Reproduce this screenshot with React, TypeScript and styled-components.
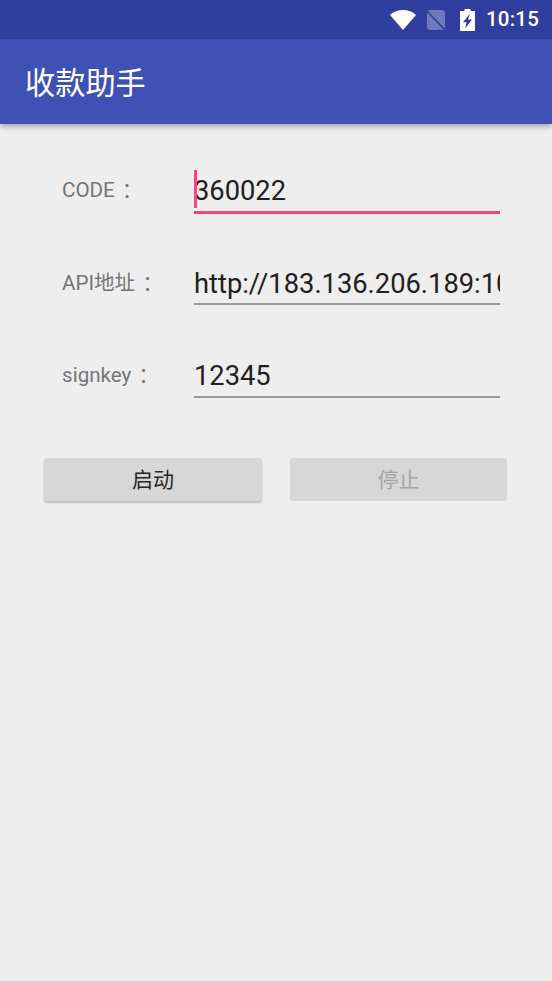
import React from 'react';
import styled, { createGlobalStyle } from 'styled-components';

const GlobalStyle = createGlobalStyle`
  html, body {
    margin: 0;
    padding: 0;
    background: #eeeeee;
  }
  body {
    font-family: Roboto, "Noto Sans CJK SC", sans-serif;
  }
`;

const Screen = styled.div`
  width: 552px;
  height: 981px;
  background: #eeeeee;
  overflow: hidden;
`;

const StatusBar = styled.div`
  height: 39px;
  background: #303f9f;
  display: flex;
  align-items: center;
  justify-content: flex-end;
  padding-right: 12px;
  box-sizing: border-box;
`;

const StatusIcon = styled.svg<{ $gap: number }>`
  display: block;
  margin-right: ${({ $gap }) => $gap}px;
`;

const Clock = styled.span`
  font-size: 20.5px;
  line-height: 39px;
  font-weight: 500;
  color: #ffffff;
  width: 54px;
  letter-spacing: 0.2px;
  white-space: nowrap;
`;

const Toolbar = styled.header`
  height: 85px;
  background: #3f51b5;
  display: flex;
  align-items: center;
  padding-left: 25px;
  box-shadow: 0 2px 6px rgba(0, 0, 0, 0.35);
  position: relative;
`;

const Title = styled.h1`
  margin: 0 0 2px;
  font-size: 30.2px;
  font-weight: 400;
  color: #ffffff;
  font-family: "Noto Sans CJK SC", sans-serif;
`;

const Form = styled.main`
  padding: 40px 44px 0 62px;
  display: flex;
  flex-direction: column;
`;

const Row = styled.div<{ $top?: number; $h: number }>`
  display: flex;
  align-items: flex-start;
  height: ${({ $h }) => $h}px;
  margin-top: ${({ $top }) => $top ?? 0}px;
`;

const Label = styled.label`
  width: 132px;
  font-size: 20.6px;
  line-height: 52px;
  color: #757575;
  white-space: nowrap;
`;

const Colon = styled.span`
  font-family: "Noto Sans CJK TC", sans-serif;
  line-height: 0;
  margin-left: 2px;
  vertical-align: -2px;
`;

const Field = styled.div<{ $active?: boolean }>`
  position: relative;
  width: 306px;
  height: 100%;
  box-sizing: border-box;
  overflow: hidden;
  white-space: nowrap;
  font-size: 27.3px;
  line-height: 54px;
  color: #212121;
  border-bottom: ${({ $active }) => ($active ? '3px solid #ec4680' : '2px solid #999999')};
`;

const Caret = styled.span`
  position: absolute;
  left: 0;
  top: 6px;
  width: 2.5px;
  height: 38px;
  background: #ff4081;
`;

const Buttons = styled.div`
  display: flex;
  gap: 28px;
  margin: 60px 0 0 -18px;
`;

const Button = styled.button<{ $disabled?: boolean }>`
  width: ${({ $disabled }) => ($disabled ? 217 : 218)}px;
  height: 43px;
  border: 0;
  border-radius: 3px;
  padding: 0 0 2px;
  background: #d6d7d6;
  font-family: "Noto Sans CJK SC", sans-serif;
  font-size: 21px;
  line-height: 41px;
  color: ${({ $disabled }) => ($disabled ? '#a4a5a4' : '#262626')};
  box-shadow: ${({ $disabled }) =>
    $disabled ? 'none' : '0 2px 2px rgba(0, 0, 0, 0.2)'};
`;

export default function App() {
  return (
    <Screen>
      <GlobalStyle />
      <StatusBar>
        <StatusIcon $gap={11} width="26" height="20" viewBox="0 0 26 20">
          <path d="M13 20 L0 5 C7 -1.6 19 -1.6 26 5 Z" fill="#fff" />
        </StatusIcon>
        <StatusIcon $gap={15} width="18" height="20" viewBox="0 0 18 20">
          <path
            d="M3 0 H15 Q18 0 18 3 V17 Q18 20 15 20 H3 Q0 20 0 17 V3 Q0 0 3 0 Z"
            fill="#fff"
            fillOpacity="0.3"
          />
          <path d="M-1 0 L19 21" stroke="#303f9f" strokeWidth="1.6" />
        </StatusIcon>
        <StatusIcon $gap={11} width="15" height="22" viewBox="0 0 15 22">
          <path
            fillRule="evenodd"
            d="M4.5 0 H10.5 V2 H15 V22 H0 V2 H4.5 Z M10 4.5 L3 13.2 H6.6 L5.2 19.8 L12 10.4 H8 Z"
            fill="#fff"
          />
        </StatusIcon>
        <Clock>10:15</Clock>
      </StatusBar>
      <Toolbar>
        <Title>收款助手</Title>
      </Toolbar>
      <Form>
        <Row $h={50}>
          <Label>
            CODE<Colon>：</Colon>
          </Label>
          <Field $active>
            <Caret />
            360022
          </Field>
        </Row>
        <Row $top={43} $h={48}>
          <Label>
            API地址<Colon>：</Colon>
          </Label>
          <Field>http://183.136.206.189:10</Field>
        </Row>
        <Row $top={44} $h={49}>
          <Label>
            signkey<Colon>：</Colon>
          </Label>
          <Field>12345</Field>
        </Row>
        <Buttons>
          <Button>启动</Button>
          <Button $disabled disabled>
            停止
          </Button>
        </Buttons>
      </Form>
    </Screen>
  );
}
